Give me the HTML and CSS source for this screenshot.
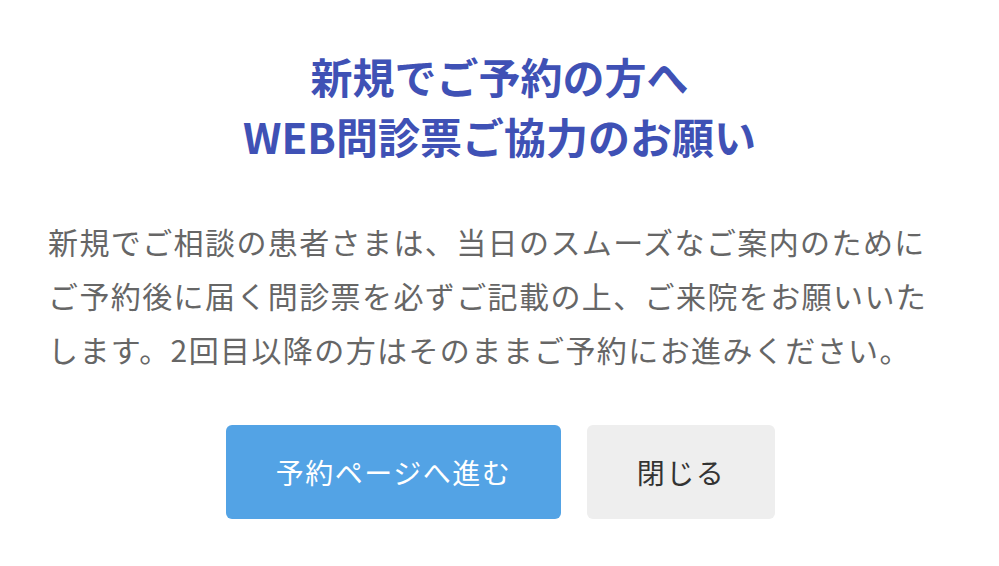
FILE: index.html
```html
<!DOCTYPE html>
<html lang="ja">
<head>
    <meta charset="UTF-8">
    <meta name="viewport" content="width=device-width, initial-scale=1.0">
    <title>WEB問診票ご協力のお願い</title>
    <link rel="stylesheet" href="styles.css">
</head>
<body>
    <div class="modal">
        <h1 class="modal-title">新規でご予約の方へ<br>WEB問診票ご協力のお願い</h1>
        <p class="modal-text">新規でご相談の患者さまは、当日のスムーズなご案内のためにご予約後に届く問診票を必ずご記載の上、ご来院をお願いいたします。2回目以降の方はそのままご予約にお進みください。</p>
        <div class="modal-buttons">
            <a class="btn btn-primary" href="#">予約ページへ進む</a>
            <button class="btn btn-close" type="button">閉じる</button>
        </div>
    </div>
</body>
</html>
```

FILE: styles.css
```css
body {
    font-family: "Noto Sans CJK JP", "Noto Sans", sans-serif;
    margin: 0;
    background-color: #ffffff;
}
.modal {
    padding: 46px 48px 0;
}
.modal-title {
    margin: 0;
    text-align: center;
    font-size: 42px;
    line-height: 60px;
    font-weight: bold;
    color: #3f51b5;
}
.modal-text {
    margin: 48px 0 0;
    font-size: 30px;
    line-height: 54px;
    letter-spacing: 1.4px;
    color: #666666;
}
.modal-buttons {
    display: flex;
    justify-content: center;
    gap: 26px;
    margin-top: 49px;
    padding-left: 2px;
}
.btn {
    display: flex;
    align-items: center;
    justify-content: center;
    height: 94px;
    border: none;
    border-radius: 6px;
    font-family: inherit;
    font-size: 28px;
    letter-spacing: 1.5px;
    text-decoration: none;
    cursor: pointer;
}
.btn-primary {
    width: 335px;
    background-color: #53a3e5;
    color: #ffffff;
}
.btn-close {
    width: 188px;
    background-color: #eeeeee;
    color: #333333;
}
```
